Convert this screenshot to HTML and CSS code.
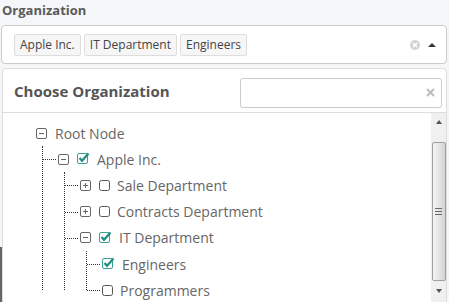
FILE: index.html
```html
<!DOCTYPE html>
<html lang="en">
<head>
  <title>Organization picker</title>
  <meta charset="utf-8">
  <meta name="viewport" content="width=device-width, initial-scale=1">
  <link rel="stylesheet" href="styles.css">
</head>
<body>
  <div class="field">
    <label class="field-label">Organization</label>
    <div class="select">
      <ul class="tags">
        <li class="tag">Apple Inc.</li>
        <li class="tag">IT Department</li>
        <li class="tag">Engineers</li>
      </ul>
      <span class="clear">
        <svg width="10" height="10" viewBox="0 0 10 10"><circle cx="5" cy="5" r="5" fill="#d4d4d4"/><path d="M3 3 L7 7 M7 3 L3 7" stroke="#fff" stroke-width="1.6"/></svg>
      </span>
      <span class="caret"></span>
    </div>

    <div class="dropdown">
      <div class="dropdown-head">
        <h2>Choose Organization</h2>
        <div class="search">
          <input type="text">
          <svg class="search-clear" width="9" height="9" viewBox="0 0 9 9"><path d="M1 1 L8 8 M8 1 L1 8" stroke="#bbb" stroke-width="1.8"/></svg>
        </div>
      </div>
      <div class="dropdown-body">
        <ul class="tree">
          <li>
            <div class="row">
              <svg class="toggle" width="11" height="11" viewBox="0 0 11 11"><rect x="0.5" y="0.5" width="10" height="10" rx="1.5" fill="none" stroke="#666"/><path d="M3 5.5 H8" stroke="#666"/></svg>
              <span>Root Node</span>
            </div>
            <ul>
              <li>
                <div class="row">
                  <svg class="toggle" width="11" height="11" viewBox="0 0 11 11"><rect x="0.5" y="0.5" width="10" height="10" rx="1.5" fill="none" stroke="#666"/><path d="M3 5.5 H8" stroke="#666"/></svg>
                  <svg class="check checked" width="13" height="12" viewBox="0 0 13 12"><rect x="0.5" y="1.5" width="10" height="10" rx="1.5" fill="none" stroke="#3aa094"/><path d="M2.5 6 L5 8.8 L11.5 1.5" fill="none" stroke="#1e8c7e" stroke-width="2.2"/></svg>
                  <span>Apple Inc.</span>
                </div>
                <ul>
                  <li>
                    <div class="row">
                      <svg class="toggle" width="11" height="11" viewBox="0 0 11 11"><rect x="0.5" y="0.5" width="10" height="10" rx="1.5" fill="none" stroke="#666"/><path d="M3 5.5 H8 M5.5 3 V8" stroke="#666"/></svg>
                      <svg class="check" width="11" height="11" viewBox="0 0 11 11"><rect x="0.5" y="0.5" width="10" height="10" rx="2" fill="none" stroke="#555"/></svg>
                      <span>Sale Department</span>
                    </div>
                  </li>
                  <li>
                    <div class="row">
                      <svg class="toggle" width="11" height="11" viewBox="0 0 11 11"><rect x="0.5" y="0.5" width="10" height="10" rx="1.5" fill="none" stroke="#666"/><path d="M3 5.5 H8 M5.5 3 V8" stroke="#666"/></svg>
                      <svg class="check" width="11" height="11" viewBox="0 0 11 11"><rect x="0.5" y="0.5" width="10" height="10" rx="2" fill="none" stroke="#555"/></svg>
                      <span>Contracts Department</span>
                    </div>
                  </li>
                  <li>
                    <div class="row">
                      <svg class="toggle" width="11" height="11" viewBox="0 0 11 11"><rect x="0.5" y="0.5" width="10" height="10" rx="1.5" fill="none" stroke="#666"/><path d="M3 5.5 H8" stroke="#666"/></svg>
                      <svg class="check checked" width="13" height="12" viewBox="0 0 13 12"><rect x="0.5" y="1.5" width="10" height="10" rx="1.5" fill="none" stroke="#3aa094"/><path d="M2.5 6 L5 8.8 L11.5 1.5" fill="none" stroke="#1e8c7e" stroke-width="2.2"/></svg>
                      <span>IT Department</span>
                    </div>
                    <ul>
                      <li>
                        <div class="row">
                          <svg class="check checked" width="13" height="12" viewBox="0 0 13 12"><rect x="0.5" y="1.5" width="10" height="10" rx="1.5" fill="none" stroke="#3aa094"/><path d="M2.5 6 L5 8.8 L11.5 1.5" fill="none" stroke="#1e8c7e" stroke-width="2.2"/></svg>
                          <span>Engineers</span>
                        </div>
                      </li>
                      <li>
                        <div class="row">
                          <svg class="check" width="11" height="11" viewBox="0 0 11 11"><rect x="0.5" y="0.5" width="10" height="10" rx="2" fill="none" stroke="#555"/></svg>
                          <span>Programmers</span>
                        </div>
                      </li>
                    </ul>
                  </li>
                </ul>
              </li>
            </ul>
          </li>
        </ul>

        <div class="scrollbar">
          <span class="arrow arrow-up"></span>
          <div class="thumb"><span class="grip"></span></div>
          <span class="arrow arrow-down"></span>
        </div>
      </div>
    </div>
  </div>
</body>
</html>
```

FILE: styles.css
```css
*, *::before, *::after {
  margin: 0;
  padding: 0;
  box-sizing: border-box;
}

body {
  height: 302px;
  overflow: hidden;
  background: linear-gradient(#666666, #666666) 0 247px / 2px 100% no-repeat, #f5f6f8;
  color: #666666;
  font-family: "Open Sans", sans-serif;
}

.field {
  padding: 0 2px 0 1px;
}

.field-label {
  display: block;
  height: 25px;
  padding: 1px 0 0 1px;
  color: #5a5a5a;
  font-size: 13px;
  font-weight: 700;
  line-height: 18px;
}

/* select control */

.select {
  display: flex;
  align-items: center;
  height: 39px;
  padding: 0 10px 0 12px;
  border: 1px solid #cccccc;
  border-radius: 4px;
  background-color: #ffffff;
}

.tags {
  display: flex;
  flex: 1;
  gap: 3px;
  list-style: none;
}

.tag {
  height: 22px;
  padding: 0 5px;
  border: 1px solid #dddddd;
  border-radius: 2px;
  background-color: #f6f6f6;
  color: #444444;
  font-size: 12px;
  line-height: 20px;
}

.clear {
  display: flex;
  margin-right: 8px;
}

.caret {
  width: 0;
  height: 0;
  border-left: 4px solid transparent;
  border-right: 4px solid transparent;
  border-bottom: 4px solid #333333;
}

/* dropdown panel */

.dropdown {
  margin: 4px 0 0 1px;
  border: 1px solid #dddddd;
  border-radius: 4px;
  background-color: #ffffff;
}

.dropdown-head {
  display: flex;
  align-items: center;
  justify-content: space-between;
  height: 44px;
  padding: 4px 4px 0 11px;
  border-bottom: 1px solid #dddddd;
}

.dropdown-head h2 {
  margin-top: -3px;
  color: #555555;
  font-size: 15px;
  font-weight: 700;
}

.search {
  display: flex;
  align-items: center;
  width: 202px;
  height: 30px;
  padding: 0 6px 0 8px;
  border: 1px solid #cccccc;
  border-radius: 3px;
}

.search input {
  flex: 1;
  min-width: 0;
  border: none;
  outline: none;
  font-family: inherit;
}

.dropdown-body {
  display: flex;
  height: 200px;
}

/* tree */

.tree {
  flex: 1;
  padding: 7px 0 0 33px;
  list-style: none;
  font-size: 14px;
}

.tree ul {
  position: relative;
  margin-left: 22px;
  list-style: none;
}

.tree ul::before {
  content: "";
  position: absolute;
  top: 0;
  bottom: 13px;
  left: -16px;
  border-left: 1px dotted #333333;
}

.tree ul > li {
  position: relative;
}

.tree ul > li::before {
  content: "";
  position: absolute;
  top: 13px;
  left: -15px;
  width: 13px;
  border-top: 1px dotted #333333;
}

.row {
  display: flex;
  align-items: center;
  height: 26.2px;
  white-space: nowrap;
}

.toggle {
  flex: none;
  margin-right: 8px;
}

.check {
  flex: none;
  margin-right: 7px;
}

.check.checked {
  margin-top: -2px;
}

/* scrollbar */

.scrollbar {
  display: flex;
  flex-direction: column;
  align-items: center;
  width: 15px;
  background-color: #f0f0f0;
}

.arrow {
  width: 0;
  height: 0;
  margin: 7px 0;
  border-left: 3.5px solid transparent;
  border-right: 3.5px solid transparent;
}

.arrow-up {
  border-bottom: 4px solid #555555;
}

.arrow-down {
  margin-top: 8px;
  border-top: 4px solid #555555;
}

.thumb {
  display: flex;
  align-items: center;
  justify-content: center;
  width: 14px;
  height: 139px;
  margin-top: 11px;
  border: 1px solid #a0a0a0;
  border-radius: 2px;
  background: linear-gradient(to right, #f4f4f4, #d4d4d4);
}

.grip {
  width: 7px;
  height: 7px;
  border-top: 1px solid #666666;
  border-bottom: 1px solid #666666;
  background: linear-gradient(#666666, #666666) center / 7px 1px no-repeat;
}
```
